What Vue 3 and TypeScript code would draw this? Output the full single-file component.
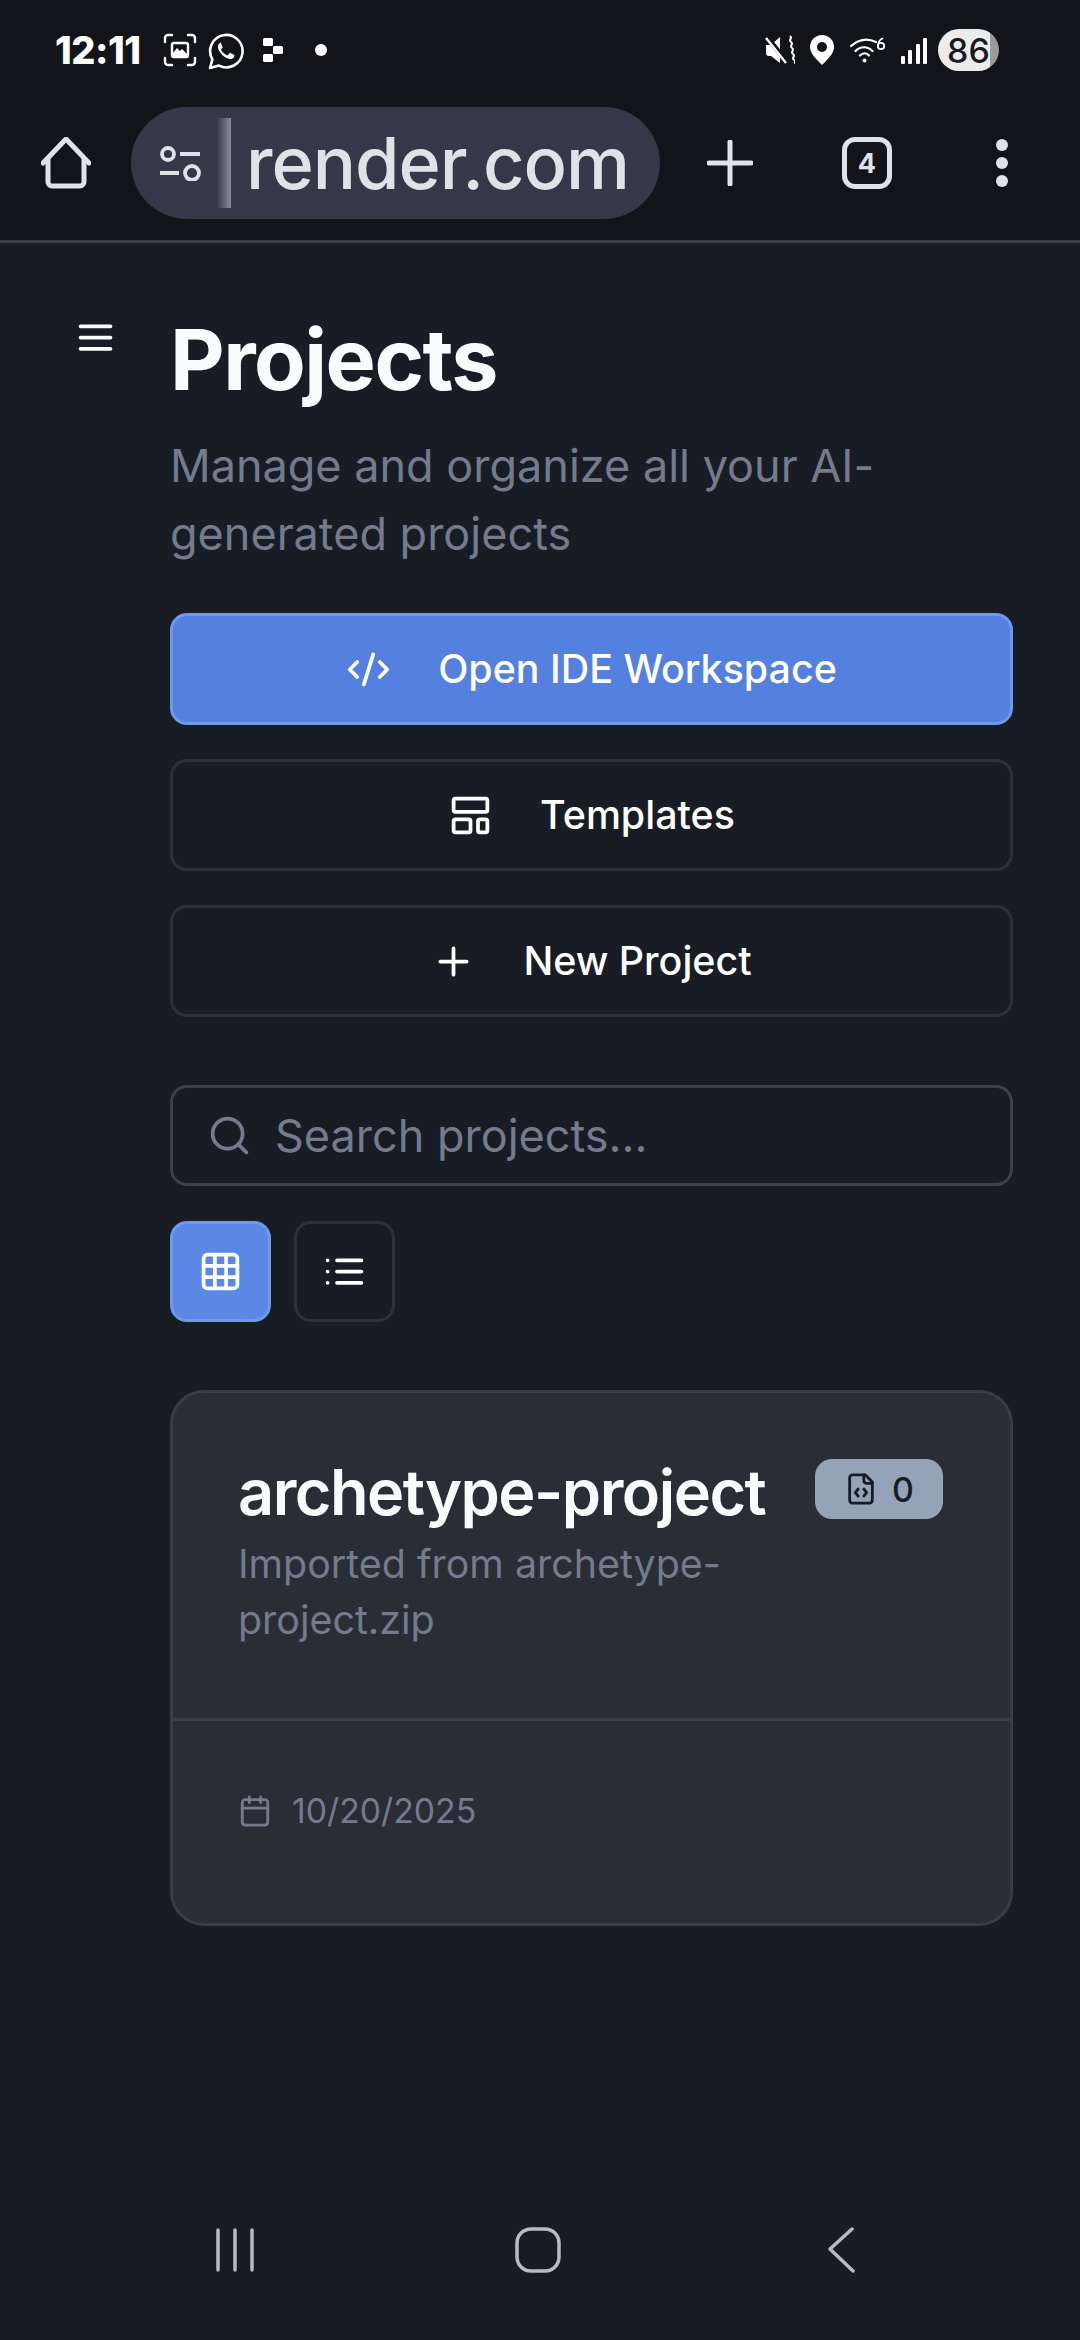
<script setup lang="ts">
const signalBars: number[] = [8, 14, 20, 26]
</script>

<template>
  <div class="screen">
    <header class="chrome">
      <div class="status">
        <span class="time">12:11</span>
        <svg class="st st-shot" viewBox="0 0 34 34" fill="none" stroke="#fff" stroke-width="2.4" stroke-linecap="round">
          <path d="M2 9V5a3 3 0 0 1 3-3h4M25 2h4a3 3 0 0 1 3 3v4M32 25v4a3 3 0 0 1-3 3h-4M9 32H5a3 3 0 0 1-3-3v-4" />
          <rect x="9" y="10" width="16" height="14" rx="2" stroke-width="2.4" />
          <path d="M10 20l4-5 3 3 2-2 5 5v2H10z" fill="#fff" stroke="none" />
        </svg>
        <svg class="st st-wa" viewBox="0 0 36 37" fill="none">
          <path d="M2 35l2.4-8.6A16.2 16.2 0 1 1 11 32.6z" stroke="#fff" stroke-width="2.6" stroke-linejoin="round" />
          <path d="M12.7 10c-.6 0-1.5.3-2.1 1.2-1.3 2-.8 5 1.800 8.500 3 4 6.400 6 9.800 6.300 2 .1 3.700-1.100 4.100-2.600.2-.7.2-1.300.1-1.500l-3.900-2c-.4-.2-.7-.1-1 .2l-1.500 1.900c-.3.300-.6.300-1 .2-2.600-1-4.500-2.900-5.800-5.200-.2-.4-.1-.7.100-.9l1.100-1.400c.2-.3.3-.6.100-1l-1.600-3.800c-.2-.6-.5-.9-1.200-.9z" fill="#fff" />
        </svg>
        <svg class="st st-app" viewBox="0 0 20 24" fill="#fff">
          <rect x="0" y="0" width="10" height="8" rx="1.500" />
          <rect x="10" y="8" width="10" height="8" rx="1.500" />
          <rect x="0" y="16" width="10" height="8" rx="1.500" />
        </svg>
        <span class="st-dot"></span>
        <span class="st-space"></span>
        <svg class="st st-mute" viewBox="0 0 30 30" fill="#fff">
          <path d="M1 10h5l9-8v26l-9-7H4a3 3 0 0 1-3-3z" />
          <path d="M2 2l19 24" stroke="#121419" stroke-width="5" />
          <path d="M1 3l20 25" stroke="#fff" stroke-width="2.400" />
          <path d="M25 1c3 2-2 4 1 6s-2 4 1 6-2 4 1 6-2 4 1 6 0 3 0 3" fill="none" stroke="#fff" stroke-width="2" />
        </svg>
        <svg class="st st-pin" viewBox="0 0 24 30">
          <path d="M12 0a12 12 0 0 1 12 12c0 6-5 11-12 18C5 23 0 18 0 12A12 12 0 0 1 12 0z" fill="#fff" />
          <circle cx="12" cy="12" r="5" fill="#121419" />
        </svg>
        <svg class="st st-wifi" viewBox="0 0 36 26" fill="none" stroke="#fff" stroke-width="2.200" stroke-linecap="round">
          <path d="M1 9c8-7 17-8 25-4M5.500 14c5-5 12-5 17 0M10 18.500c3-3 6.500-3 9 0" />
          <circle cx="14.500" cy="23.500" r="2" fill="#fff" stroke="none" />
          <circle cx="31" cy="9" r="3.200" stroke-width="1.800" />
          <path d="M28 9c0-4 1-6 4.500-7.500" stroke-width="1.800" />
        </svg>
        <div class="st-signal">
          <i v-for="h in signalBars" :key="h" :style="{ height: h + 'px' }"></i>
        </div>
        <div class="battery"><span>86</span></div>
      </div>

      <div class="toolbar">
        <svg class="tb-home" viewBox="0 0 50 52" fill="none" stroke="#e0e2e8" stroke-width="5" stroke-linejoin="round" stroke-linecap="round">
          <path d="M2 26L25 2l23 24" />
          <path d="M7 22v23a4 4 0 0 0 4 4h28a4 4 0 0 0 4-4V22" />
        </svg>
        <div class="url">
          <svg class="url-ico" viewBox="0 0 42 36" fill="none" stroke="#e0e2e8" stroke-width="3.800">
            <circle cx="9" cy="9" r="6" />
            <path d="M21 9h20M1 28h19" />
            <circle cx="33" cy="28" r="7" />
          </svg>
          <div class="url-clip"><span class="url-text">render.com</span><span class="url-fade"></span></div>
        </div>
        <svg class="tb-plus" viewBox="0 0 46 46" stroke="#e0e2e8" stroke-width="5" stroke-linecap="round">
          <path d="M23 2v42M2 23h42" />
        </svg>
        <div class="tabs">4</div>
        <div class="more"><i></i><i></i><i></i></div>
      </div>
    </header>

    <div class="page">
      <aside class="side">
        <svg class="menu" viewBox="0 0 24 24" fill="none" stroke="#fafbfc" stroke-width="2" stroke-linecap="round">
          <path d="M4 6h16M4 12h16M4 18h16" />
        </svg>
      </aside>
      <main class="content">
        <h1 class="title">Projects</h1>
        <p class="sub">Manage and organize all your AI-generated projects</p>

        <button class="btn primary">
          <svg class="btn-ico" viewBox="0 0 24 24" fill="none" stroke="#fff" stroke-width="2" stroke-linecap="round" stroke-linejoin="round">
            <path d="m18 16 4-4-4-4M6 8l-4 4 4 4M14.500 4l-5 16" />
          </svg>
          <span>Open IDE Workspace</span>
        </button>
        <button class="btn">
          <svg class="btn-ico" viewBox="0 0 24 24" fill="none" stroke="#fff" stroke-width="2" stroke-linecap="round" stroke-linejoin="round">
            <rect x="3" y="3" width="18" height="7" rx="1" />
            <rect x="3" y="14" width="9" height="7" rx="1" />
            <rect x="16" y="14" width="5" height="7" rx="1" />
          </svg>
          <span>Templates</span>
        </button>
        <button class="btn">
          <svg class="btn-ico" viewBox="0 0 24 24" fill="none" stroke="#fff" stroke-width="2" stroke-linecap="round">
            <path d="M5 12h14M12 5v14" />
          </svg>
          <span>New Project</span>
        </button>

        <div class="search">
          <svg class="search-ico" viewBox="0 0 24 24" fill="none" stroke="#737b8c" stroke-width="2" stroke-linecap="round">
            <circle cx="11" cy="11" r="8" />
            <path d="m21 21-4.300-4.300" />
          </svg>
          <span>Search projects...</span>
        </div>

        <div class="views">
          <button class="view active">
            <svg viewBox="0 0 24 24" fill="none" stroke="#fff" stroke-width="2" stroke-linecap="round" stroke-linejoin="round">
              <rect x="3" y="3" width="18" height="18" rx="2" />
              <path d="M3 9h18M3 15h18M9 3v18M15 3v18" />
            </svg>
          </button>
          <button class="view">
            <svg viewBox="0 0 24 24" fill="none" stroke="#fff" stroke-width="2" stroke-linecap="round">
              <path d="M8 6h13M8 12h13M8 18h13M3 6h.01M3 12h.01M3 18h.01" />
            </svg>
          </button>
        </div>

        <article class="card">
          <div class="card-head">
            <div class="card-text">
              <h2 class="card-title">archetype-project</h2>
              <p class="card-desc">Imported from archetype-project.zip</p>
            </div>
            <div class="badge">
              <svg viewBox="0 0 24 24" fill="none" stroke="#181c25" stroke-width="2" stroke-linecap="round" stroke-linejoin="round">
                <path d="M15 2H6a2 2 0 0 0-2 2v16a2 2 0 0 0 2 2h12a2 2 0 0 0 2-2V7z" />
                <path d="M14 2v4a2 2 0 0 0 2 2h4M10 12l-2 2.500 2 2.500M14 17l2-2.500-2-2.500" />
              </svg>
              <span>0</span>
            </div>
          </div>
          <div class="card-foot">
            <svg viewBox="0 0 24 24" fill="none" stroke="#737b8c" stroke-width="2" stroke-linecap="round" stroke-linejoin="round">
              <path d="M8 2v4M16 2v4" />
              <rect x="3" y="4" width="18" height="18" rx="2" />
              <path d="M3 10h18" />
            </svg>
            <span>10/20/2025</span>
          </div>
        </article>
      </main>
    </div>

    <nav class="nav">
      <div class="nav-cell">
        <svg class="nav-recent" viewBox="0 0 40 44" stroke="#b8bbc0" stroke-width="3.500" stroke-linecap="round">
          <path d="M3 2v40M20 2v40M37 2v40" />
        </svg>
      </div>
      <div class="nav-cell">
        <svg class="nav-home" viewBox="0 0 46 46" fill="none" stroke="#b8bbc0" stroke-width="3.500">
          <rect x="2" y="2" width="42" height="42" rx="14" />
        </svg>
      </div>
      <div class="nav-cell">
        <svg class="nav-back" viewBox="0 0 28 46" fill="none" stroke="#b8bbc0" stroke-width="3.500" stroke-linecap="round" stroke-linejoin="round">
          <path d="M25 2L3 22l23 22" />
        </svg>
      </div>
    </nav>
  </div>
</template>

<style>
html,
body {
  margin: 0;
  background: #181c25;
}
</style>

<style scoped>
* {
  box-sizing: border-box;
}
.screen {
  width: 1080px;
  height: 2340px;
  display: flex;
  flex-direction: column;
  background: #181c25;
  font-family: Inter, "Noto Sans", sans-serif;
  color: #fff;
  overflow: hidden;
}
.chrome {
  background: #121419;
  border-bottom: 3px solid #383c47;
  height: 243px;
  flex: none;
}
.status {
  height: 92px;
  padding: 8px 0 0 55px;
  display: flex;
  align-items: center;
}
.time {
  font-size: 38px;
  font-weight: 800;
  width: 108px;
  letter-spacing: -0.5px;
}
.st {
  flex: none;
}
.st-shot {
  width: 34px;
  height: 34px;
}
.st-wa {
  width: 36px;
  height: 37px;
  margin-left: 11px;
  margin-top: 2px;
}
.st-app {
  width: 20px;
  height: 24px;
  margin-left: 19px;
}
.st-dot {
  width: 12px;
  height: 12px;
  border-radius: 50%;
  background: #fff;
  margin-left: 32px;
}
.st-space {
  flex: 1;
}
.st-mute {
  width: 30px;
  height: 30px;
}
.st-pin {
  width: 24px;
  height: 30px;
  margin-left: 15px;
}
.st-wifi {
  width: 36px;
  height: 26px;
  margin-left: 16px;
}
.st-signal {
  display: flex;
  align-items: flex-end;
  gap: 3.500px;
  margin-left: 15px;
  height: 28px;
}
.st-signal i {
  width: 4px;
  background: #fff;
  border-radius: 1px;
}
.battery {
  width: 61px;
  height: 42px;
  margin: 0 81px 0 11px;
  border-radius: 21px;
  background: linear-gradient(90deg, #ececec 0 86%, #9a9a9a 86% 100%);
  color: #181a1f;
  font-size: 34px;
  font-weight: 500;
  display: flex;
  align-items: center;
  justify-content: center;
}
.toolbar {
  height: 142px;
  display: flex;
  align-items: center;
  padding-left: 41px;
}
.tb-home {
  width: 50px;
  height: 52px;
  flex: none;
}
.url {
  width: 529px;
  height: 112px;
  margin-left: 40px;
  border-radius: 56px;
  background: #343848;
  display: flex;
  align-items: center;
  padding-left: 28px;
  flex: none;
}
.url-ico {
  width: 42px;
  height: 36px;
  flex: none;
}
.url-clip {
  position: relative;
  width: 412px;
  margin-left: 16px;
  overflow: hidden;
  display: flex;
  justify-content: flex-end;
}
.url-text {
  font-size: 72px;
  font-weight: 500;
  line-height: 90px;
  color: #e0e2e8;
  white-space: nowrap;
  letter-spacing: -1px;
}
.url-fade {
  position: absolute;
  left: 0;
  top: 0;
  bottom: 0;
  width: 14px;
  background: linear-gradient(90deg, #343848, rgba(150, 153, 165, 0.9));
}
.tb-plus {
  width: 46px;
  height: 46px;
  margin-left: 47px;
  flex: none;
}
.tabs {
  width: 50px;
  height: 52px;
  margin-left: 89px;
  border: 5px solid #e0e2e8;
  border-radius: 13px;
  color: #e0e2e8;
  font-size: 27px;
  font-weight: 700;
  display: flex;
  align-items: center;
  justify-content: center;
  flex: none;
}
.more {
  margin-left: 104px;
  display: flex;
  flex-direction: column;
  gap: 6px;
  flex: none;
}
.more i {
  width: 12px;
  height: 12px;
  border-radius: 50%;
  background: #e0e2e8;
}
.page {
  flex: 1;
  display: flex;
  min-height: 0;
}
.side {
  width: 170px;
  flex: none;
  padding: 72px 0 0 73px;
}
.menu {
  width: 45px;
  height: 45px;
  display: block;
}
.content {
  width: 843px;
  padding-top: 66px;
  display: flex;
  flex-direction: column;
}
.title {
  margin: 0;
  font-size: 84.400px;
  line-height: 101px;
  font-weight: 700;
  color: #fafbfc;
  letter-spacing: -1.500px;
}
.sub {
  margin: 22px 0 46px;
  font-size: 45px;
  line-height: 67.500px;
  color: #737b8c;
}
.btn {
  height: 112px;
  flex: none;
  margin: 0 0 34px;
  padding: 0;
  background: transparent;
  border: 3px solid #2d313b;
  border-radius: 17px;
  color: #fff;
  font: 500 39.400px Inter, sans-serif;
  display: flex;
  align-items: center;
  justify-content: center;
  gap: 47px;
}
.btn.primary {
  background: #5480e0;
  border-color: #7099ea;
}
.btn-ico {
  width: 45px;
  height: 45px;
  flex: none;
}
.search {
  height: 101px;
  flex: none;
  margin-top: 34px;
  border: 3px solid #3c414d;
  border-radius: 17px;
  display: flex;
  align-items: center;
  padding-left: 34px;
  gap: 23px;
  font-size: 45px;
  color: #737b8c;
}
.search-ico {
  width: 45px;
  height: 45px;
  flex: none;
}
.views {
  display: flex;
  gap: 23px;
  margin-top: 35px;
  flex: none;
}
.view {
  width: 101px;
  height: 101px;
  padding: 0;
  background: transparent;
  border: 3px solid #2d313b;
  border-radius: 17px;
  display: flex;
  align-items: center;
  justify-content: center;
}
.view.active {
  background: #5a88e4;
  border-color: #7099ea;
}
.view svg {
  width: 45px;
  height: 45px;
}
.card {
  margin-top: 68px;
  background: #292d36;
  border: 3px solid #383c47;
  border-radius: 34px;
  flex: none;
}
.card-head {
  display: flex;
  align-items: flex-start;
  justify-content: space-between;
  padding: 60px 67px 70px 65px;
  border-bottom: 3px solid #383c47;
}
.card-text {
  width: 560px;
}
.card-title {
  margin: 0 0 5px;
  font-size: 63px;
  line-height: 78px;
  font-weight: 600;
  color: #fafbfc;
  letter-spacing: -1.500px;
  white-space: nowrap;
}
.card-desc {
  margin: 0;
  font-size: 39.400px;
  line-height: 56px;
  color: #737b8c;
}
.badge {
  margin-top: 6px;
  width: 128px;
  height: 60px;
  border-radius: 17px;
  background: #94a3b8;
  color: #181c25;
  display: flex;
  align-items: center;
  justify-content: center;
  gap: 14px;
  font-size: 34px;
  font-weight: 500;
}
.badge svg {
  width: 34px;
  height: 34px;
}
.card-foot {
  display: flex;
  align-items: center;
  gap: 20px;
  padding: 67px 65px 90px;
  font-size: 33.750px;
  line-height: 45px;
  color: #737b8c;
}
.card-foot svg {
  width: 34px;
  height: 34px;
  flex: none;
}
.nav {
  height: 134px;
  flex: none;
  display: flex;
  padding-left: 83px;
  align-items: flex-start;
  padding-top: 0;
}
.nav-cell {
  width: 303px;
  height: 88px;
  display: flex;
  align-items: center;
  justify-content: center;
  padding-top: 0;
}
.nav-recent {
  width: 40px;
  height: 44px;
}
.nav-home {
  width: 46px;
  height: 46px;
}
.nav-back {
  width: 28px;
  height: 46px;
}
</style>
